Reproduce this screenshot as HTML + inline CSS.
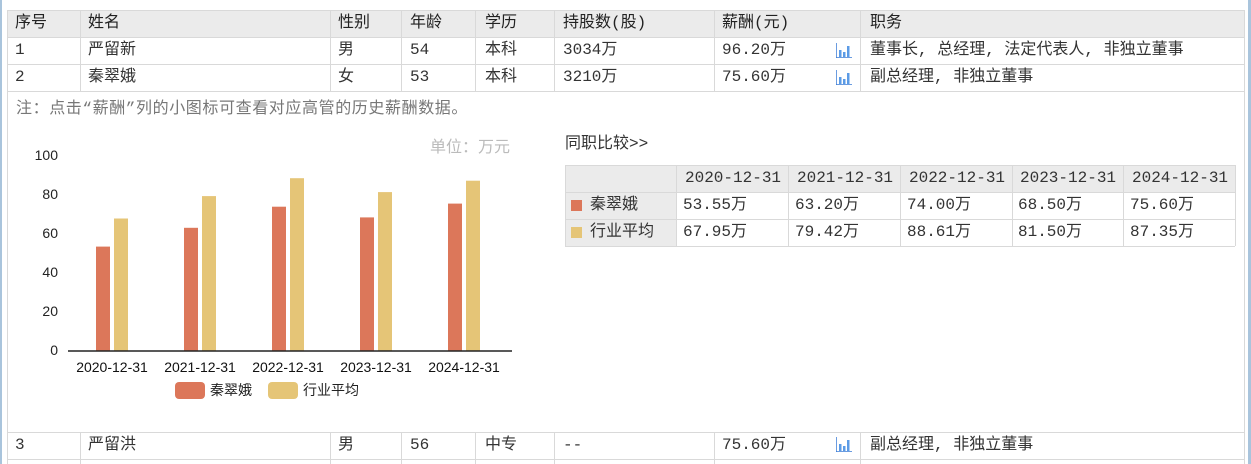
<!DOCTYPE html>
<html><head><meta charset="utf-8"><style>
*{margin:0;padding:0;box-sizing:border-box}
body{width:1251px;height:464px;background:#fff;position:relative;overflow:hidden;font-family:"Liberation Mono","Noto Sans CJK SC",monospace;color:#333;font-size:16px}
.a{position:absolute}
.hl{position:absolute;height:1px;background:#d9d9d9}
.vl{position:absolute;width:1px;background:#d9d9d9}
.t{position:absolute;white-space:nowrap;line-height:27px}
.h{font-size:16px;color:#222}
.ico{position:absolute;width:16px;height:15px}
</style></head><body>
<div class="a" style="left:0;top:0;width:2px;height:464px;background:#a9c4dc"></div>
<div class="a" style="left:1248px;top:0;width:3px;height:464px;background:#a9c4dc"></div>
<div class="a" style="left:8px;top:10px;width:1236px;height:27px;background:#ebebeb"></div>
<div class="hl" style="left:8px;top:10px;width:1236px"></div>
<div class="hl" style="left:8px;top:37px;width:1236px"></div>
<div class="hl" style="left:8px;top:64px;width:1236px"></div>
<div class="hl" style="left:8px;top:91px;width:1236px"></div>
<div class="hl" style="left:8px;top:432px;width:1236px"></div>
<div class="hl" style="left:8px;top:459px;width:1236px"></div>
<div class="vl" style="left:7px;top:10px;height:454px"></div>
<div class="vl" style="left:1244px;top:10px;height:454px"></div>
<div class="vl" style="left:80px;top:10px;height:81px"></div><div class="vl" style="left:80px;top:432px;height:32px"></div>
<div class="vl" style="left:330px;top:10px;height:81px"></div><div class="vl" style="left:330px;top:432px;height:32px"></div>
<div class="vl" style="left:401px;top:10px;height:81px"></div><div class="vl" style="left:401px;top:432px;height:32px"></div>
<div class="vl" style="left:475px;top:10px;height:81px"></div><div class="vl" style="left:475px;top:432px;height:32px"></div>
<div class="vl" style="left:554px;top:10px;height:81px"></div><div class="vl" style="left:554px;top:432px;height:32px"></div>
<div class="vl" style="left:714px;top:10px;height:81px"></div><div class="vl" style="left:714px;top:432px;height:32px"></div>
<div class="vl" style="left:860px;top:10px;height:81px"></div><div class="vl" style="left:860px;top:432px;height:32px"></div>
<div class="t h" style="left:15px;top:10px">序号</div>
<div class="t h" style="left:88px;top:10px">姓名</div>
<div class="t h" style="left:338px;top:10px">性别</div>
<div class="t h" style="left:410px;top:10px">年龄</div>
<div class="t h" style="left:485px;top:10px">学历</div>
<div class="t h" style="left:563px;top:10px">持股数(股)</div>
<div class="t h" style="left:722px;top:10px">薪酬(元)</div>
<div class="t h" style="left:870px;top:10px">职务</div>
<div class="t" style="left:15px;top:37px">1</div><div class="t" style="left:88px;top:37px">严留新</div><div class="t" style="left:338px;top:37px">男</div><div class="t" style="left:410px;top:37px">54</div><div class="t" style="left:485px;top:37px">本科</div><div class="t" style="left:563px;top:37px">3034万</div><div class="t" style="left:722px;top:37px">96.20万</div><div class="t" style="left:870px;top:37px">董事长, 总经理, 法定代表人, 非独立董事</div>
<div class="t" style="left:15px;top:64px">2</div><div class="t" style="left:88px;top:64px">秦翠娥</div><div class="t" style="left:338px;top:64px">女</div><div class="t" style="left:410px;top:64px">53</div><div class="t" style="left:485px;top:64px">本科</div><div class="t" style="left:563px;top:64px">3210万</div><div class="t" style="left:722px;top:64px">75.60万</div><div class="t" style="left:870px;top:64px">副总经理, 非独立董事</div>
<div class="t" style="left:15px;top:432px">3</div><div class="t" style="left:88px;top:432px">严留洪</div><div class="t" style="left:338px;top:432px">男</div><div class="t" style="left:410px;top:432px">56</div><div class="t" style="left:485px;top:432px">中专</div><div class="t" style="left:563px;top:432px">--</div><div class="t" style="left:722px;top:432px">75.60万</div><div class="t" style="left:870px;top:432px">副总经理, 非独立董事</div>
<svg class="ico" style="left:836px;top:43px" viewBox="0 0 16 15"><path d="M0 0v15h16" stroke="#3a7bd5" stroke-width="1.5" fill="none"/><rect x="3" y="7" width="2.5" height="7" fill="#5b9be6"/><rect x="7" y="9" width="2.5" height="5" fill="#5b9be6"/><rect x="11" y="3" width="2.5" height="11" fill="#5b9be6"/></svg>
<svg class="ico" style="left:836px;top:70px" viewBox="0 0 16 15"><path d="M0 0v15h16" stroke="#3a7bd5" stroke-width="1.5" fill="none"/><rect x="3" y="7" width="2.5" height="7" fill="#5b9be6"/><rect x="7" y="9" width="2.5" height="5" fill="#5b9be6"/><rect x="11" y="3" width="2.5" height="11" fill="#5b9be6"/></svg>
<svg class="ico" style="left:836px;top:437px" viewBox="0 0 16 15"><path d="M0 0v15h16" stroke="#3a7bd5" stroke-width="1.5" fill="none"/><rect x="3" y="7" width="2.5" height="7" fill="#5b9be6"/><rect x="7" y="9" width="2.5" height="5" fill="#5b9be6"/><rect x="11" y="3" width="2.5" height="11" fill="#5b9be6"/></svg>
<div class="t" style="left:16px;top:96px;color:#777;letter-spacing:0.6px">注：点击“薪酬”列的小图标可查看对应高管的历史薪酬数据。</div>
<svg class="a" style="left:0;top:130px" width="530" height="280" viewBox="0 130 530 280" font-family="Liberation Sans,sans-serif">
<g font-size="14" fill="#222" text-anchor="end">
<text x="58" y="160">100</text><text x="58" y="199">80</text><text x="58" y="238">60</text><text x="58" y="277">40</text><text x="58" y="316">20</text><text x="58" y="355">0</text>
</g>
<text x="510" y="152" font-size="16" fill="#bbb" text-anchor="end" font-family="Noto Sans CJK SC,sans-serif">单位：万元</text>
<g fill="#dc775a">
<rect x="96" y="246.6" width="14" height="104.4"/><rect x="184" y="227.8" width="14" height="123.2"/><rect x="272" y="206.7" width="14" height="144.3"/><rect x="360" y="217.4" width="14" height="133.6"/><rect x="448" y="203.6" width="14" height="147.4"/>
</g>
<g fill="#e5c577">
<rect x="114" y="218.5" width="14" height="132.5"/><rect x="202" y="196.1" width="14" height="154.9"/><rect x="290" y="178.2" width="14" height="172.8"/><rect x="378" y="192.1" width="14" height="158.9"/><rect x="466" y="180.7" width="14" height="170.3"/>
</g>
<line x1="68" y1="351" x2="512" y2="351" stroke="#222" stroke-width="1.5"/>
<g font-size="14" fill="#111" text-anchor="middle">
<text x="112" y="372">2020-12-31</text><text x="200" y="372">2021-12-31</text><text x="288" y="372">2022-12-31</text><text x="376" y="372">2023-12-31</text><text x="464" y="372">2024-12-31</text>
</g>
<rect x="175" y="382" width="30" height="17" rx="4" fill="#dc775a"/>
<text x="210" y="395" font-size="14" fill="#222" font-family="Noto Sans CJK SC,sans-serif">秦翠娥</text>
<rect x="268" y="382" width="30" height="17" rx="4" fill="#e5c577"/>
<text x="303" y="395" font-size="14" fill="#222" font-family="Noto Sans CJK SC,sans-serif">行业平均</text>
</svg>
<div class="t" style="left:565px;top:131px">同职比较&gt;&gt;</div>
<div class="a" style="left:565px;top:165px;width:670px;height:27px;background:#ebebeb"></div>
<div class="a" style="left:565px;top:192px;width:111px;height:54px;background:#ebebeb"></div>
<div class="hl" style="left:565px;top:165px;width:670px"></div>
<div class="hl" style="left:565px;top:192px;width:670px"></div>
<div class="hl" style="left:565px;top:219px;width:670px"></div>
<div class="hl" style="left:565px;top:246px;width:670px"></div>
<div class="vl" style="left:565px;top:165px;height:81px"></div>
<div class="vl" style="left:676px;top:165px;height:81px"></div>
<div class="vl" style="left:788px;top:165px;height:81px"></div>
<div class="vl" style="left:900px;top:165px;height:81px"></div>
<div class="vl" style="left:1012px;top:165px;height:81px"></div>
<div class="vl" style="left:1123px;top:165px;height:81px"></div>
<div class="vl" style="left:1235px;top:165px;height:81px"></div>
<div class="t" style="left:685px;top:165px">2020-12-31</div><div class="t" style="left:797px;top:165px">2021-12-31</div><div class="t" style="left:909px;top:165px">2022-12-31</div><div class="t" style="left:1020px;top:165px">2023-12-31</div><div class="t" style="left:1132px;top:165px">2024-12-31</div>
<div class="a" style="left:571px;top:200px;width:11px;height:11px;background:#dc775a"></div>
<div class="a" style="left:571px;top:227px;width:11px;height:11px;background:#e5c577"></div>
<div class="t" style="left:590px;top:192px">秦翠娥</div>
<div class="t" style="left:590px;top:219px">行业平均</div>
<div class="t" style="left:683px;top:192px">53.55万</div><div class="t" style="left:795px;top:192px">63.20万</div><div class="t" style="left:907px;top:192px">74.00万</div><div class="t" style="left:1018px;top:192px">68.50万</div><div class="t" style="left:1130px;top:192px">75.60万</div>
<div class="t" style="left:683px;top:219px">67.95万</div><div class="t" style="left:795px;top:219px">79.42万</div><div class="t" style="left:907px;top:219px">88.61万</div><div class="t" style="left:1018px;top:219px">81.50万</div><div class="t" style="left:1130px;top:219px">87.35万</div>
</body></html>
